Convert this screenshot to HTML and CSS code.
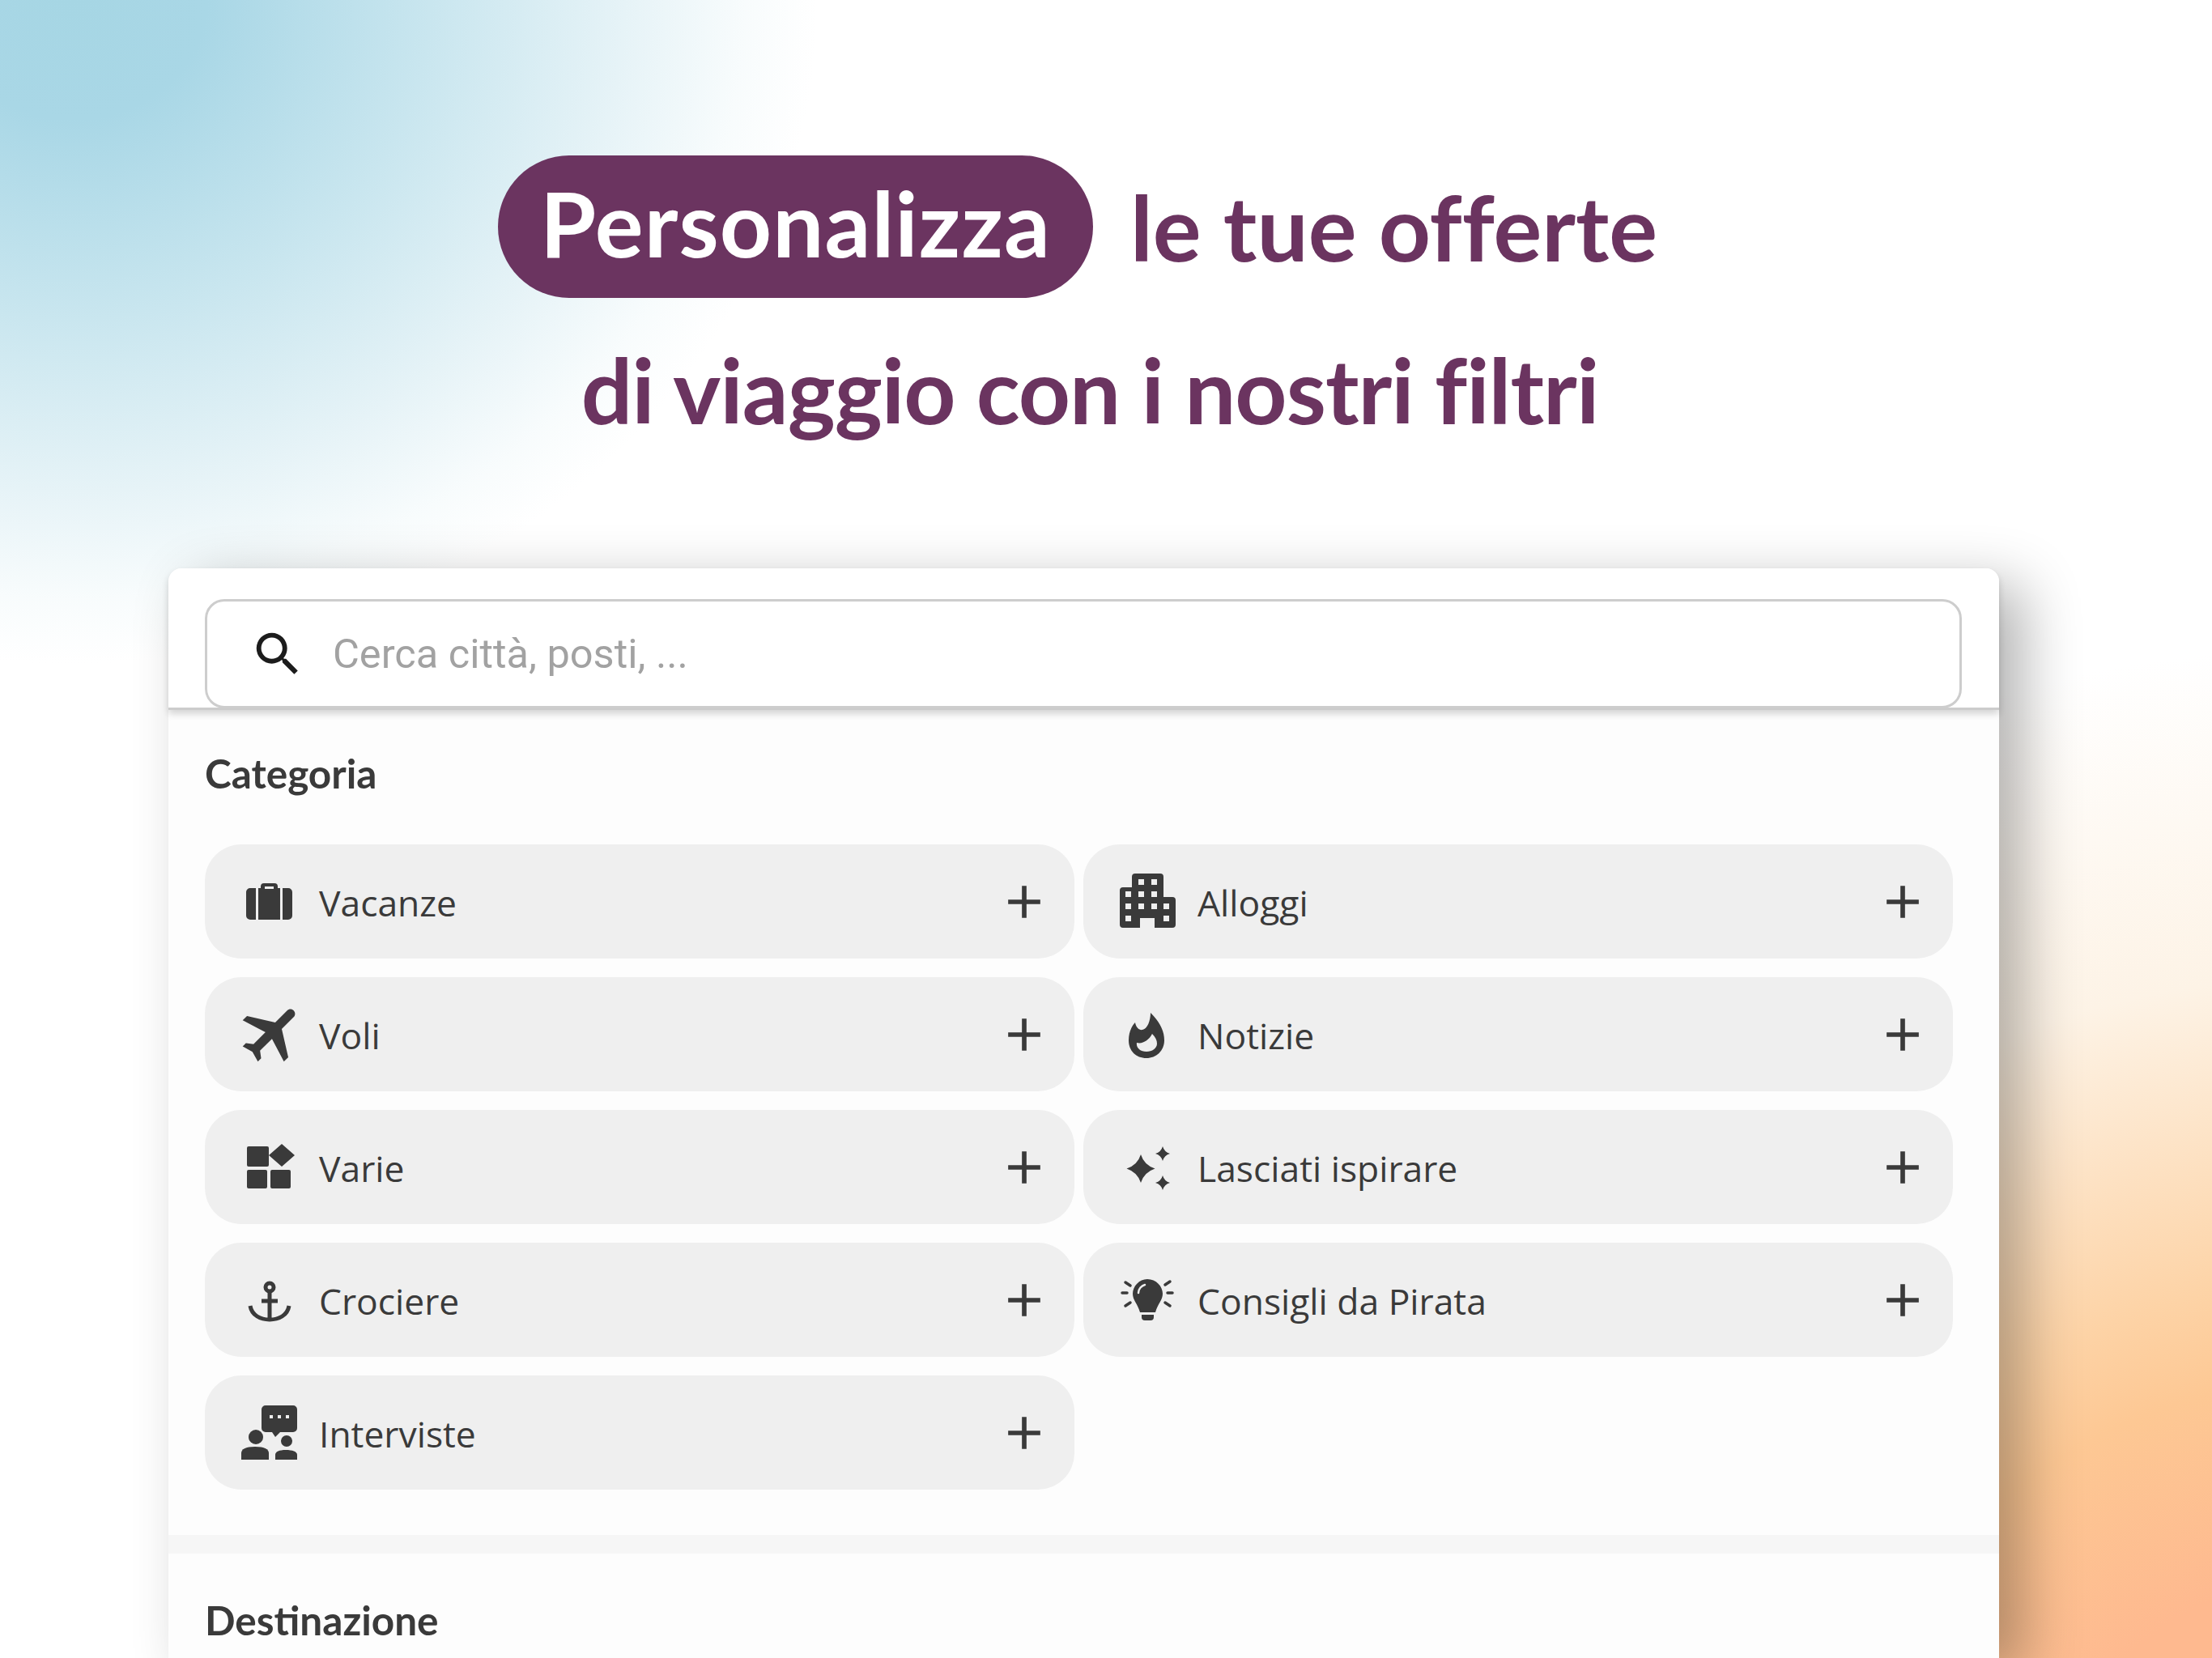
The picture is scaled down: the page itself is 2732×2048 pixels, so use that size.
FILE: index.html
```html
<!DOCTYPE html>
<html lang="it">
<head>
  <meta charset="UTF-8">
  <meta name="viewport" content="width=device-width, initial-scale=1.0">
  <title>Personalizza le tue offerte</title>
  <link rel="stylesheet" href="styles.css">
</head>
<body>
  <header class="hero">
    <h1 class="hero-line hero-line-first"><span class="pill">Personalizza</span> <span>le tue offerte</span></h1>
    <p class="hero-line hero-line-second">di viaggio con i nostri filtri</p>
  </header>

  <main class="card">
    <div class="search-section">
      <div class="search-box">
        <svg class="search-icon" viewBox="0 0 24 24"><path d="M15.5 14h-.79l-.28-.27A6.47 6.47 0 0 0 16 9.5 6.5 6.5 0 1 0 9.5 16c1.61 0 3.09-.59 4.23-1.57l.27.28v.79l5 4.99L20.49 19l-4.99-5zm-6 0C7.01 14 5 11.99 5 9.5S7.01 5 9.5 5 14 7.01 14 9.5 11.99 14 9.5 14z"/></svg>
        <span class="search-placeholder">Cerca città, posti, ...</span>
      </div>
    </div>

    <section class="filter-section">
      <h2 class="section-title">Categoria</h2>
      <div class="filter-grid">
        <div class="filter-row">
          <svg class="row-icon" viewBox="0 0 70 70"><path fill-rule="evenodd" d="M11 18h7v39h-7a5 5 0 0 1-5-5V23a5 5 0 0 1 5-5zM21 18h3v-2a4 4 0 0 1 4-4h13a4 4 0 0 1 4 4v2h3v39H21zM29 16v3h11v-3zM51 18h7a5 5 0 0 1 5 5v29a5 5 0 0 1-5 5h-7z"/></svg>
          <span class="row-label">Vacanze</span>
          <svg class="plus-icon" viewBox="0 0 24 24"><path d="M19 13h-6v6h-2v-6H5v-2h6V5h2v6h6v2z"/></svg>
        </div>
        <div class="filter-row">
          <svg class="row-icon" viewBox="0 0 70 70"><path fill-rule="evenodd" d="M19 0h31a4 4 0 0 1 4 4v25h11a4 4 0 0 1 4 4v30a4 4 0 0 1-4 4H43V55H25v12H4a4 4 0 0 1-4-4V21a4 4 0 0 1 4-4h11V4a4 4 0 0 1 4-4zM23 7v7h7V7zM39 7v7h7V7zM7 22v7h7v-7zM23 22v7h7v-7zM39 22v7h7v-7zM7 37v7h7v-7zM23 37v7h7v-7zM39 37v7h7v-7zM54 37v7h7v-7zM7 52v7h7v-7zM54 52v7h7v-7z"/></svg>
          <span class="row-label">Alloggi</span>
          <svg class="plus-icon" viewBox="0 0 24 24"><path d="M19 13h-6v6h-2v-6H5v-2h6V5h2v6h6v2z"/></svg>
        </div>
        <div class="filter-row">
          <svg class="row-icon" viewBox="0 0 24 24"><path transform="translate(1 -1) rotate(45 12 12) translate(12 12) scale(1.3) translate(-11.5 -12)" d="M21 16v-2l-8-5V3.5c0-.83-.67-1.5-1.5-1.5S10 2.67 10 3.5V9l-8 5v2l8-2.5V19l-2 1.5V22l3.5-1 3.5 1v-1.5L13 19v-5.5l8 2.5z"/></svg>
          <span class="row-label">Voli</span>
          <svg class="plus-icon" viewBox="0 0 24 24"><path d="M19 13h-6v6h-2v-6H5v-2h6V5h2v6h6v2z"/></svg>
        </div>
        <div class="filter-row">
          <svg class="row-icon" viewBox="0 0 70 70"><path fill-rule="evenodd" d="M38 8C44 14 55 26 55 42 55 55 45 64 33 64 20 64 11 55 11 42 11 32 15 24 19 20 20 26 24 30 28 29 34 28 38 18 38 8zM33 56C25 56 20 51 21 45 28 47 36 42 40 34 44 38 46 42 46 46 46 52 40 56 33 56z"/></svg>
          <span class="row-label">Notizie</span>
          <svg class="plus-icon" viewBox="0 0 24 24"><path d="M19 13h-6v6h-2v-6H5v-2h6V5h2v6h6v2z"/></svg>
        </div>
        <div class="filter-row">
          <svg class="row-icon" viewBox="0 0 70 70"><path d="M9 9h23a2 2 0 0 1 2 2v21a2 2 0 0 1-2 2H9a2 2 0 0 1-2-2V11a2 2 0 0 1 2-2zM9 38h21a2 2 0 0 1 2 2v19a2 2 0 0 1-2 2H9a2 2 0 0 1-2-2V40a2 2 0 0 1 2-2zM38 38h21a2 2 0 0 1 2 2v19a2 2 0 0 1-2 2H38a2 2 0 0 1-2-2V40a2 2 0 0 1 2-2zM50 6 34 20l16 14 16-14z"/></svg>
          <span class="row-label">Varie</span>
          <svg class="plus-icon" viewBox="0 0 24 24"><path d="M19 13h-6v6h-2v-6H5v-2h6V5h2v6h6v2z"/></svg>
        </div>
        <div class="filter-row">
          <svg class="row-icon" viewBox="0 0 70 70"><path d="M26 19Q30 32 43.500 36.500 30 41 26 54 22 41 8.500 36.500 22 32 26 19zM53 9Q55 16 62 18 55 20 53 27 51 20 44 18 51 16 53 9zM53 45Q55 52 62 54 55 56 53 63 51 56 44 54 51 52 53 45z"/></svg>
          <span class="row-label">Lasciati ispirare</span>
          <svg class="plus-icon" viewBox="0 0 24 24"><path d="M19 13h-6v6h-2v-6H5v-2h6V5h2v6h6v2z"/></svg>
        </div>
        <div class="filter-row">
          <svg class="row-icon" viewBox="0 0 70 70"><circle class="icon-outline" cx="35" cy="19" r="5"/><path class="icon-outline" d="M35 24v36M25 36h20M11 42C13 54 24 59 35 59S57 54 59 42"/></svg>
          <span class="row-label">Crociere</span>
          <svg class="plus-icon" viewBox="0 0 24 24"><path d="M19 13h-6v6h-2v-6H5v-2h6V5h2v6h6v2z"/></svg>
        </div>
        <div class="filter-row">
          <svg class="row-icon" viewBox="0 0 70 70"><path d="M34 9C45 9 53 18 53 27 53 35 47 39 44 50H25C22 39 16 35 16 27 16 18 24 9 34 9zM27 53h15v3a4 4 0 0 1-4 4h-7a4 4 0 0 1-4-4z"/><path class="icon-highlight" d="M23 26c0-5 4-9 8-10"/><path class="icon-line" d="M3 26h6M59 26h6M7 13l6 4M62 12l-6 4M7 42l6-4M62 42l-6-4"/></svg>
          <span class="row-label">Consigli da Pirata</span>
          <svg class="plus-icon" viewBox="0 0 24 24"><path d="M19 13h-6v6h-2v-6H5v-2h6V5h2v6h6v2z"/></svg>
        </div>
        <div class="filter-row">
          <svg class="row-icon" viewBox="0 0 70 70"><path fill-rule="evenodd" d="M30 1h34a5 5 0 0 1 5 5v23a5 5 0 0 1-5 5H48l-6 6-4-6h-8a5 5 0 0 1-5-5V6a5 5 0 0 1 5-5zM35 13v4h4v-4zM45 13v4h4v-4zM55 13v4h4v-4z"/><circle cx="18" cy="40" r="9"/><path d="M0 68V60c0-5 5-8 17-8s17 3 17 8v8z"/><circle cx="56" cy="45" r="7"/><path d="M42 68v-6c0-4 5-6 13-6s14 2 14 6v6z"/></svg>
          <span class="row-label">Interviste</span>
          <svg class="plus-icon" viewBox="0 0 24 24"><path d="M19 13h-6v6h-2v-6H5v-2h6V5h2v6h6v2z"/></svg>
        </div>
      </div>
    </section>

    <section class="filter-section filter-section-next">
      <h2 class="section-title">Destinazione</h2>
    </section>
  </main>
</body>
</html>
```

FILE: styles.css
```css
html, body {
  margin: 0;
  padding: 0;
}

body {
  width: 2732px;
  height: 2048px;
  overflow: hidden;
  font-family: "Lato", "Noto Sans", sans-serif;
  color: #3a3a3a;
  background-color: #ffffff;
  background-image:
    radial-gradient(ellipse 920px 820px at 90px 0, #a6d6e4 0%, #a9d7e6 18%, #c9e6ef 48%, #e6f3f7 74%, rgba(246, 251, 252, 0.8) 90%, rgba(255, 255, 255, 0) 100%),
    radial-gradient(ellipse 1600px 1500px at 2900px 2300px, #feb98f 0%, #feb98f 24%, #fdc894 40%, #fdd3a6 48%, #fdf3e6 73%, rgba(255, 255, 255, 0) 100%);
}

/* heading */
.hero {
  padding-top: 192px;
  color: #6b3460;
  font-size: 112px;
  font-weight: 700;
  text-align: center;
  font-variant-ligatures: none;
}

.hero-line {
  margin: 0;
  font: inherit;
  line-height: 1;
}

.hero-line-first {
  display: flex;
  justify-content: center;
  align-items: center;
  gap: 46px;
  padding-right: 70px;
  height: 176px;
}

.hero-line-second {
  padding-right: 40px;
  margin-top: 57px;
  letter-spacing: -1px;
}

.pill {
  display: block;
  padding: 0 52px;
  height: 176px;
  line-height: 166px;
  border-radius: 88px;
  background-color: #6b3460;
  color: #ffffff;
  letter-spacing: 1.1px;
}

/* card */
.card {
  box-sizing: border-box;
  width: 2261px;
  margin: 165px 0 0 208px;
  height: 1347px;
  overflow: visible;
  background-color: #fdfdfd;
  border-radius: 16px 16px 0 0;
  box-shadow: 30px 20px 70px rgba(0, 0, 0, 0.3);
}

.search-section {
  padding: 38px 46px 0 45px;
  height: 175px;
  box-sizing: border-box;
  border-bottom: 3px solid #cccccc;
  border-radius: 16px 16px 0 0;
  background-color: #ffffff;
  box-shadow: 0 5px 9px rgba(0, 0, 0, 0.16);
}

.search-box {
  box-sizing: border-box;
  display: flex;
  align-items: center;
  height: 135px;
  padding-left: 52px;
  background-color: #ffffff;
  border: 3px solid #cdcdcd;
  border-radius: 24px;
}

.search-icon {
  width: 70px;
  height: 70px;
  fill: #1c1c1c;
  margin-right: 33px;
  flex-shrink: 0;
}

.search-placeholder {
  font-family: "Roboto", sans-serif;
  font-size: 50.500px;
  color: #a2a2a2;
}

.filter-section {
  padding: 0 57px 56px 45px;
  border-bottom: 23px solid #f6f6f6;
}

.filter-section-next {
  padding-bottom: 0;
  border-bottom: none;
}

.section-title {
  margin: 0;
  padding-top: 48px;
  height: 118px;
  font-size: 49.500px;
  font-weight: 700;
  line-height: 60px;
  color: #3a3a3a;
}

.filter-section-next .section-title {
  height: 60px;
  padding-top: 52px;
}

.filter-grid {
  display: grid;
  grid-template-columns: 1074px 1074px;
  column-gap: 11px;
  row-gap: 23px;
}

.filter-row {
  display: flex;
  align-items: center;
  height: 141px;
  padding: 0 28px 0 45px;
  box-sizing: border-box;
  border-radius: 45px;
  background-color: #efefef;
}

.row-icon {
  width: 70px;
  height: 70px;
  fill: #3a3a3a;
  flex-shrink: 0;
  margin-right: 26px;
  overflow: visible;
}

.row-label {
  flex: 1;
  font-family: "Open Sans", sans-serif;
  font-size: 44.400px;
  color: #3a3a3a;
  padding-top: 3px;
}

.plus-icon {
  width: 68px;
  height: 68px;
  fill: #3a3a3a;
  flex-shrink: 0;
}

.icon-outline {
  fill: none;
  stroke: #3a3a3a;
  stroke-width: 5;
}

.icon-line {
  fill: none;
  stroke: #3a3a3a;
  stroke-width: 3.500;
  stroke-linecap: round;
}

.icon-highlight {
  fill: none;
  stroke: #efefef;
  stroke-width: 2.500;
  stroke-linecap: round;
}
```
